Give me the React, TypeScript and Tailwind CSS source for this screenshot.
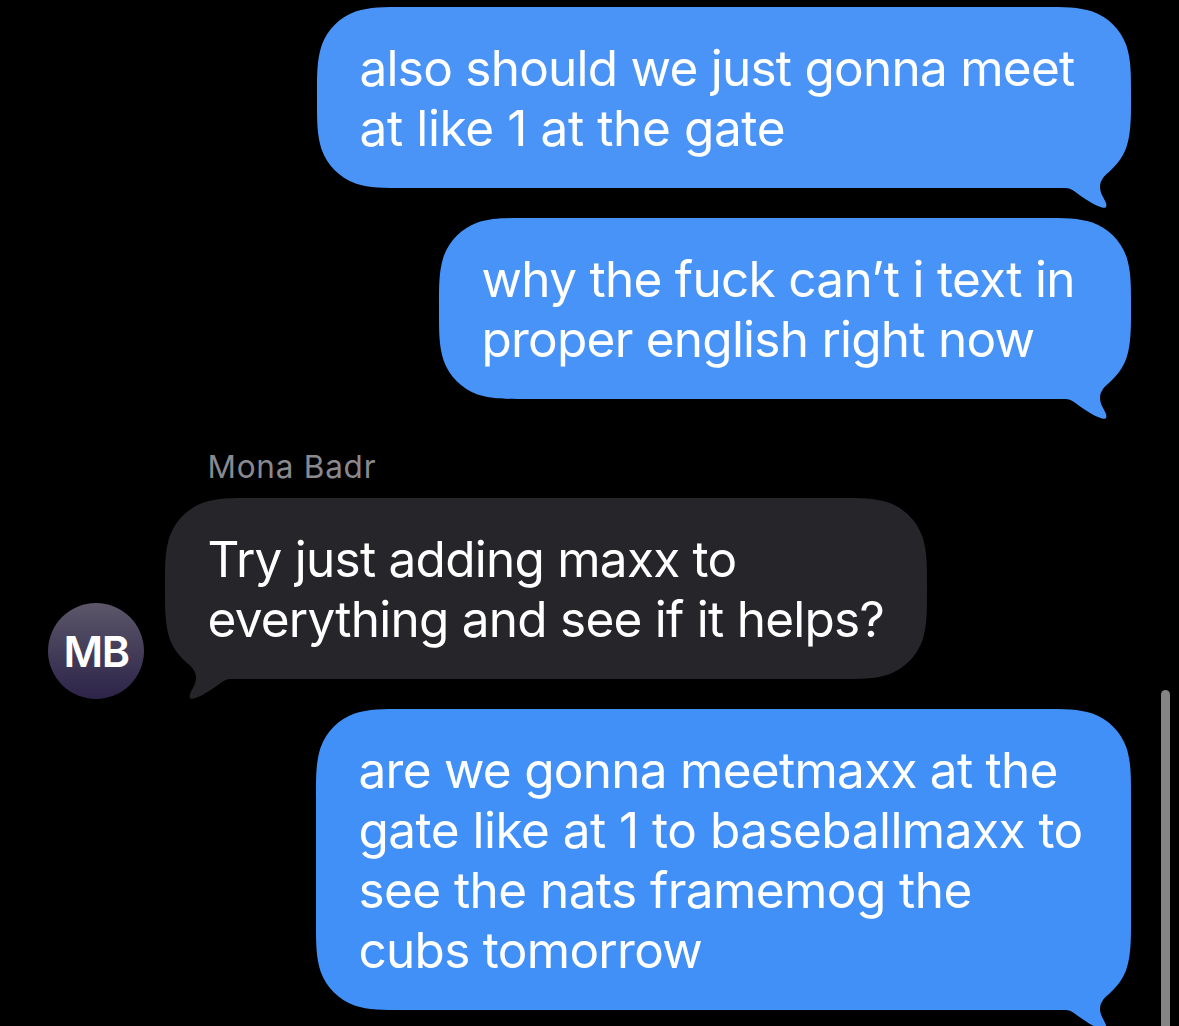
import React from 'react';
import clsx from 'clsx';

interface Line {
  text: string;
  tracking: string;
}

interface BubbleProps {
  lines: Line[];
  width: number;
  height: number;
  color: string;
  incoming?: boolean;
  className?: string;
}

// Outline of a bubble with continuous corners and its tail at the bottom right
const bubblePath = (w: number, h: number) =>
  [
    'M88 0',
    `H${w - 88}`,
    `C${w - 66} 0 ${w - 53} 0 ${w - 38.5} 4.6`,
    `C${w - 22.7} 10.3 ${w - 10.3} 22.7 ${w - 4.6} 38.5`,
    `C${w} 53 ${w} 66 ${w} 88`,
    `V${h - 82}`,
    `C${w} ${h - 42} ${w - 6} ${h - 31} ${w - 22} ${h - 16}`,
    `C${w - 28} ${h - 11} ${w - 31} ${h - 7} ${w - 31} ${h - 1}`,
    `C${w - 31} ${h + 5} ${w - 27} ${h + 10} ${w - 25} ${h + 15}`,
    `C${w - 24} ${h + 19} ${w - 25} ${h + 20.5} ${w - 29} ${h + 19.5}`,
    `C${w - 40} ${h + 16} ${w - 50} ${h + 8} ${w - 57} ${h + 3}`,
    `C${w - 60} ${h + 1} ${w - 62} ${h} ${w - 66} ${h}`,
    'H88',
    `C66 ${h} 53 ${h} 38.5 ${h - 4.6}`,
    `C22.7 ${h - 10.3} 10.3 ${h - 22.7} 4.6 ${h - 38.5}`,
    `C0 ${h - 53} 0 ${h - 66} 0 ${h - 88}`,
    'V88',
    'C0 66 0 53 4.6 38.5',
    'C10.3 22.7 22.7 10.3 38.5 4.6',
    'C53 0 66 0 88 0Z',
  ].join(' ');

const Bubble: React.FC<BubbleProps> = ({ lines, width, height, color, incoming, className }) => (
  <div className={clsx('relative shrink-0 pl-[42.5px] pt-[31px]', className)} style={{ width, height }}>
    <svg
      className={clsx('absolute left-0 top-0 overflow-visible', color, incoming && '-scale-x-100')}
      width={width}
      height={height}
      fill="currentColor"
      aria-hidden="true"
    >
      <path d={bubblePath(width, height)} />
    </svg>
    {lines.map((line) => (
      <p key={line.text} className={clsx('relative whitespace-pre text-[49.5px] leading-[60px] text-white', line.tracking)}>
        {line.text}
      </p>
    ))}
  </div>
);

export default function App() {
  return (
    <main className="relative flex h-[1026px] w-[1179px] flex-col overflow-hidden bg-black pl-12 pr-12 pt-[7px] font-['Inter',sans-serif]">
      <Bubble
        className="self-end"
        width={814}
        height={181}
        color="text-[#4a94f8]"
        lines={[
          { text: 'also should we just gonna meet', tracking: 'tracking-[-0.75px]' },
          { text: 'at like 1 at the gate', tracking: 'tracking-[-0.38px]' },
        ]}
      />
      <Bubble
        className="mt-[30px] self-end"
        width={692}
        height={181}
        color="text-[#4893f8]"
        lines={[
          { text: 'why the fuck can’t i text in', tracking: 'tracking-[-0.71px]' },
          { text: 'proper english right now', tracking: 'tracking-[-0.76px]' },
        ]}
      />

      <p className="mt-[48px] pl-[159.5px] text-[31.5px] leading-[40px] tracking-[0.76px] text-[#8a898f]">Mona Badr</p>
      <div className="mt-[11px] flex items-end gap-[21px]">
        <div className="-mb-5 flex size-24 items-center justify-center rounded-full bg-linear-to-b from-[#5c5769] to-[#2d2449] pt-px text-[43px] font-semibold leading-none tracking-[-1.5px] text-white">
          MB
        </div>
        <Bubble
          incoming
          width={762}
          height={181}
          color="text-[#26252a]"
          lines={[
            { text: 'Try just adding maxx to', tracking: 'tracking-[-0.75px]' },
            { text: 'everything and see if it helps?', tracking: 'tracking-[-0.75px]' },
          ]}
        />
      </div>

      <Bubble
        className="mt-[30px] self-end"
        width={815}
        height={301}
        color="text-[#4190f8]"
        lines={[
          { text: 'are we gonna meetmaxx at the', tracking: 'tracking-[-0.73px]' },
          { text: 'gate like at 1 to baseballmaxx to', tracking: 'tracking-[-0.52px]' },
          { text: 'see the nats framemog the', tracking: 'tracking-[-0.57px]' },
          { text: 'cubs tomorrow', tracking: 'tracking-[-0.72px]' },
        ]}
      />

      {/* scroll indicator */}
      <div className="absolute bottom-0 right-[9px] top-[690px] w-[9px] rounded-t-full bg-[#858585]" />
    </main>
  );
}
